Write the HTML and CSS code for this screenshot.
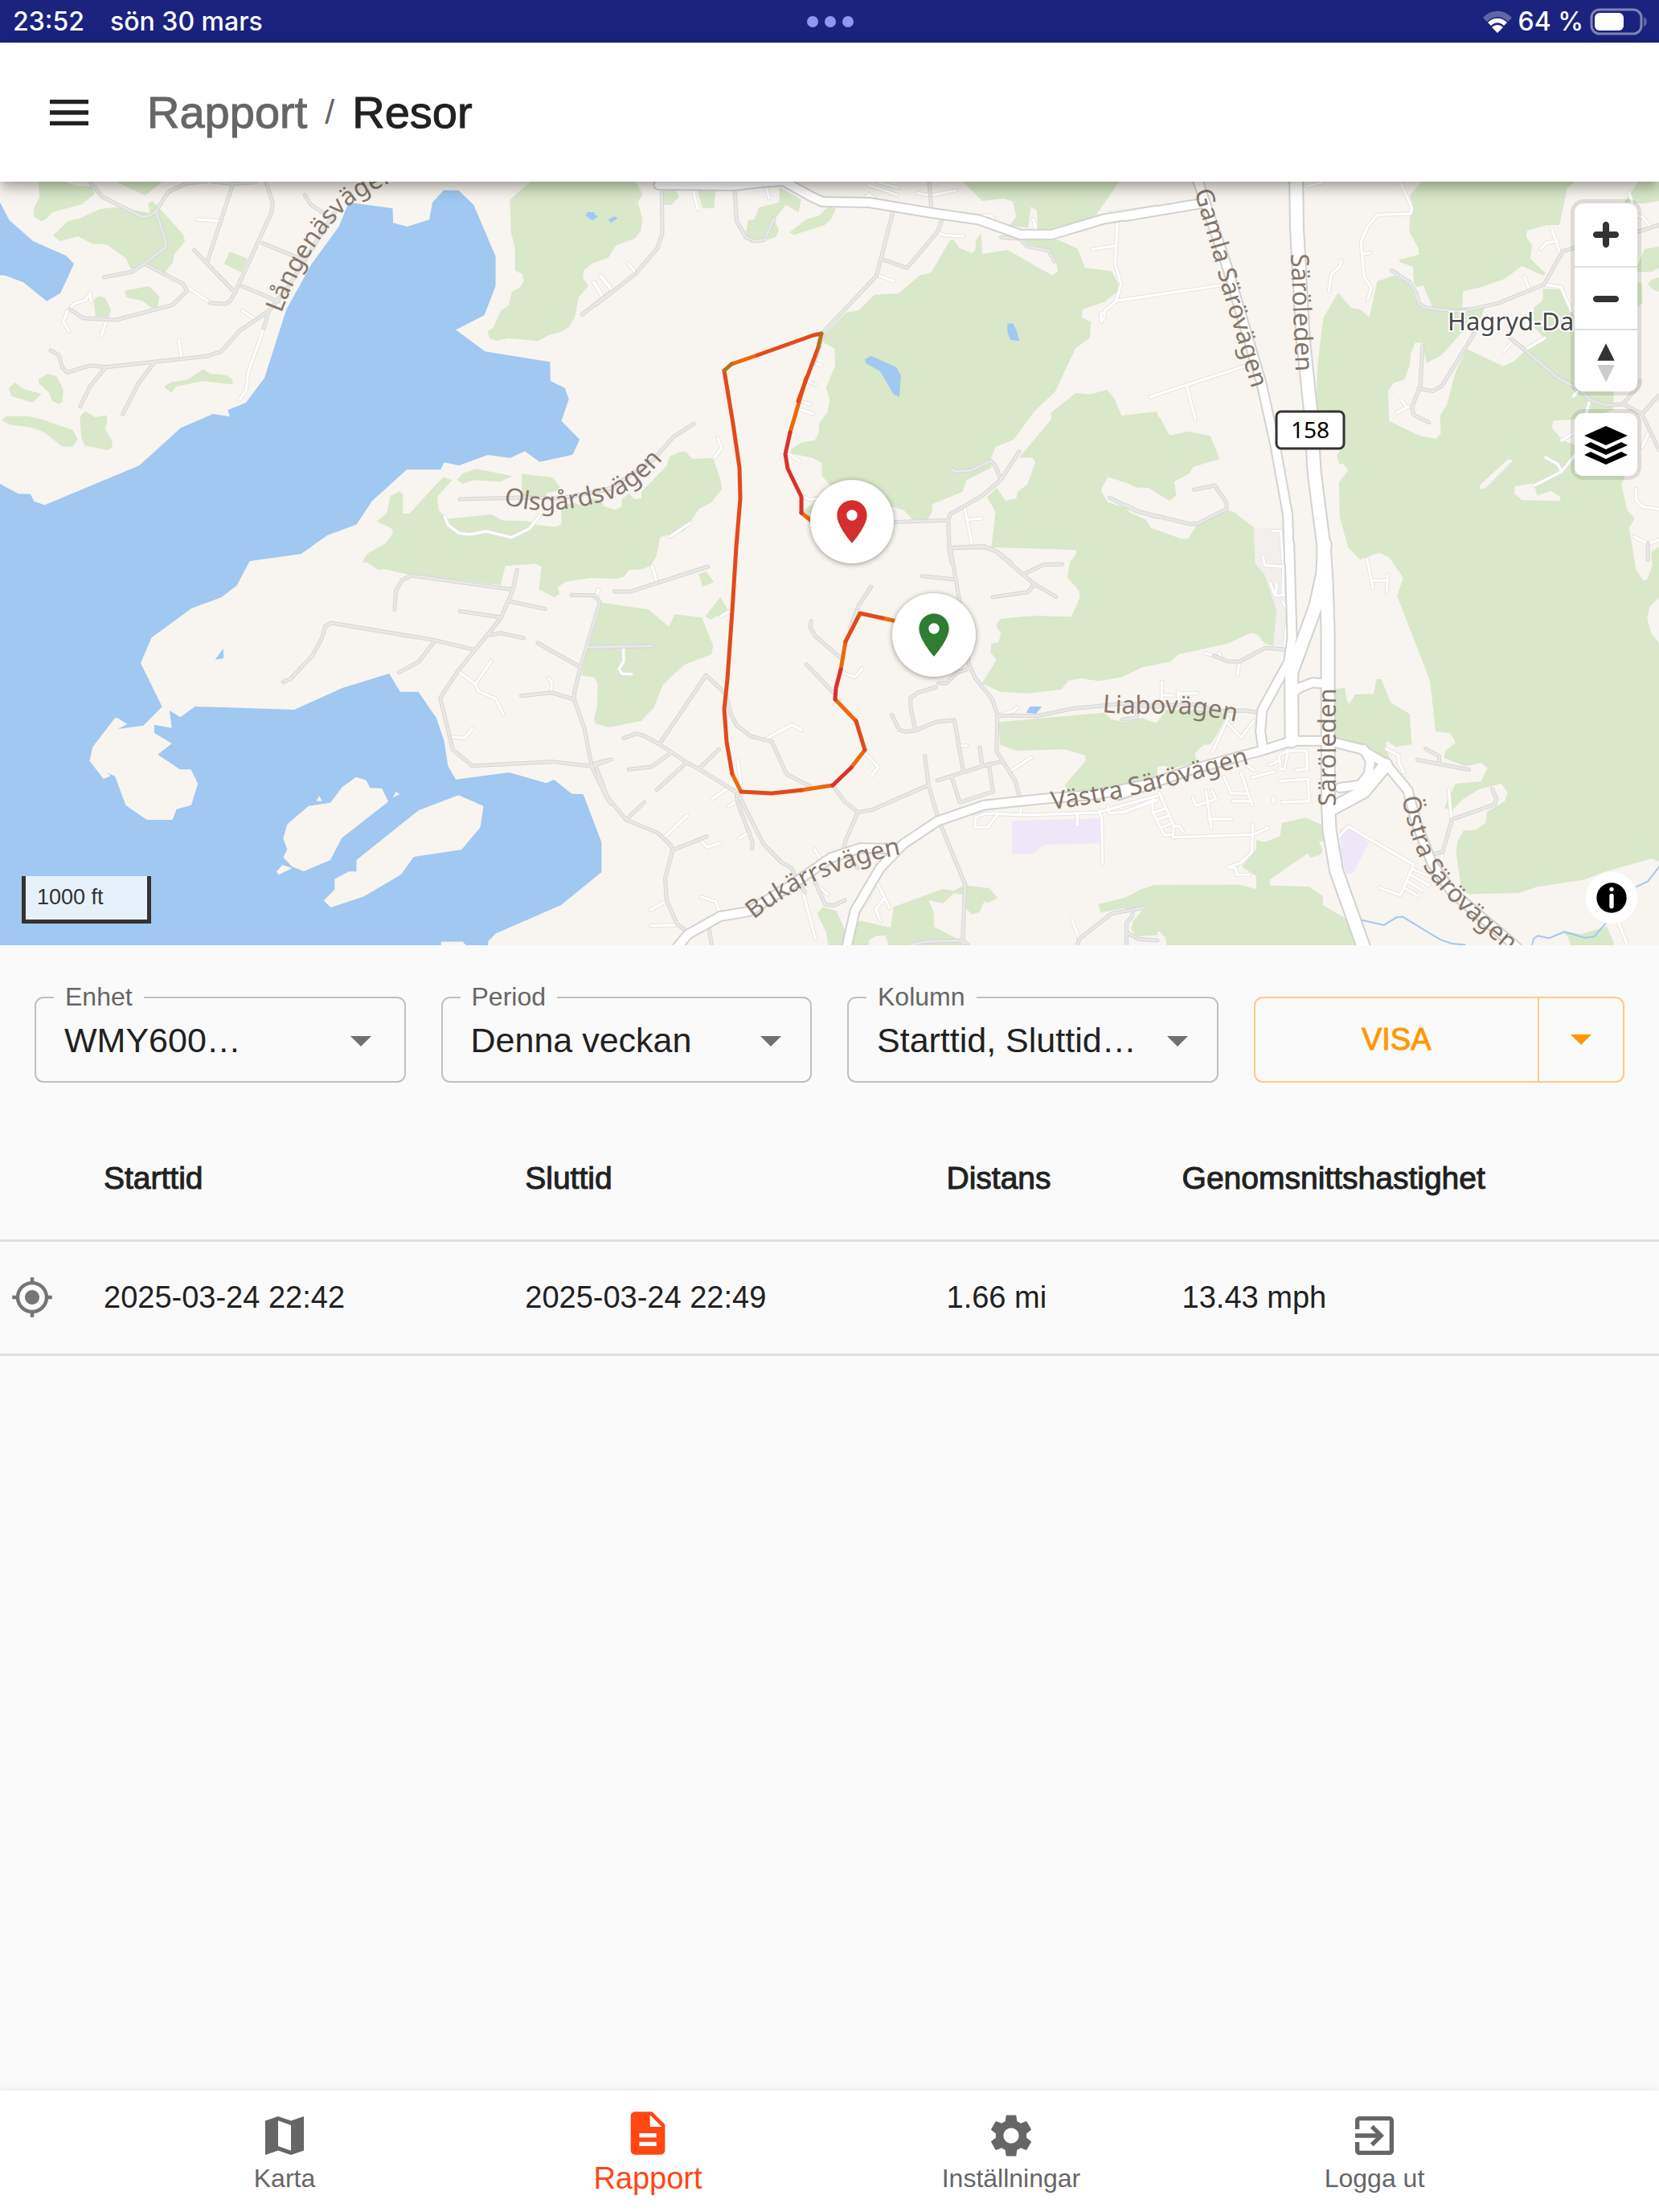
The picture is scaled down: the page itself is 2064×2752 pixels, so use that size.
FILE: index.html
```html
<!doctype html>
<html lang="sv">
  <head>
    <meta charset="UTF-8" />
    <meta name="viewport" content="width=device-width, initial-scale=1.0" />
    <title>Rapport / Resor</title>
    <link rel="stylesheet" href="styles.css">
  </head>
  <body>
    <div class="status-bar">
        <div class="status-left">
            <span>23:52</span>
            <span>sön 30 mars</span>
        </div>
        <svg class="dots" viewBox="0 0 58 14" aria-hidden="true">
            <circle cx="7" cy="7" r="7" /><circle cx="29" cy="7" r="7" /><circle cx="51" cy="7" r="7" />
        </svg>
        <div class="status-right">
            <svg class="wifi" viewBox="0 0 36 28" aria-hidden="true">
                <path class="faint" d="M0 9C10-2 26-2 36 9L31 14C23 6 13 6 5 14z" />
                <path d="M6 15C13 8 23 8 30 15L26 19C21 14 15 14 10 19z" />
                <path d="M11 21C15 17 21 17 25 21L18 28z" />
            </svg>
            <span>64 %</span>
            <svg class="battery" viewBox="0 0 72 34" aria-hidden="true">
                <rect class="battery-frame" x="2" y="2" width="62" height="30" rx="10" />
                <rect x="6" y="6" width="36" height="22" rx="6" />
                <path class="faint" d="M67 11c5 2 5 10 0 12z" />
            </svg>
        </div>
    </div>

    <header class="toolbar">
        <button type="button" class="icon-button" aria-label="Meny">
            <svg class="icon" viewBox="0 0 24 24"><path d="M3 18h18v-2H3v2zm0-5h18v-2H3v2zm0-7v2h18V6H3z" /></svg>
        </button>
        <nav class="breadcrumbs">
            <a href="#rapport">Rapport</a>
            <span class="separator">/</span>
            <h1>Resor</h1>
        </nav>
    </header>

    <main>
        <section class="map" aria-label="Karta">
            <svg class="map-canvas" viewBox="0 0 2064 950" preserveAspectRatio="xMidYMid slice">
                <defs>
                    <!-- small lanes and driveways -->
                    <g id="lanes">
                        <path transform="translate(0 -6) scale(.4847 .3333)" d="M507,159 L565,165 M233,465 L232,435 220,460 190,474 172,505 162,540 178,577 M273,535 L260,597 M459,610 L466,678 M677,565 L637,730 632,795 615,832 M622,500 L655,530 M1142,1268 L1150,1300 1178,1330 1204,1335 1248,1323 1313,1346 1360,1312 1385,1265 M1523,392 L1548,450 M1540,366 L1566,410 M480,412 L540,470" />
                        <path transform="translate(0 454) scale(.4847 .3333)" d="M1261,427 L1220,513 M1175,465 L1220,513 1228,540 1272,568 1292,625 M1408,492 L1416,505 1415,545 M1156,711 L1193,714 1213,678 M1537,160 L1532,185" />
                        <path transform="translate(740 -6) scale(.4464 .3333)" d="M273,40 L287,123 M475,30 L486,80 M93,323 L115,360 M15,370 L48,425 M0,395 L22,452 M785,365 L834,390 M762,30 L843,68 M790,20 L845,40 M748,88 L765,65 792,95 M898,60 L935,70 1007,50 M1000,142 L1105,145 1113,165 M1222,158 L1232,205 M953,208 L975,218 1028,222 M1442,133 L1472,127 M1458,135 L1450,325 1467,400 1453,463 1410,515 1412,540 1420,525 1422,505 M1453,463 L1568,440 M1385,270 L1450,258 M615,695 L632,705 M592,762 L615,775 M578,838 L600,850 M572,868 L608,885 M540,1033 L572,1062 M343,975 L353,1012 333,1050 M265,1293 L210,1343 M577,1190 L598,1205 625,1200 M1030,1230 L1052,1380 M1040,1280 L1078,1275 M1548,822 L1568,812" />
                        <path transform="translate(740 454) scale(.4464 .3333)" d="M10,160 L0,190 M160,72 L173,135 M80,370 L80,430 67,457 77,475 103,476 M352,260 L375,242 M473,720 L550,665 576,685 M398,795 L407,885 M327,942 L372,900 M372,970 L398,950 M192,1088 L257,1004 M290,1090 L313,1122 350,1107 M403,1090 L430,1065 M753,772 L790,823 770,858 M695,473 L725,487 746,455 M1130,628 L1165,615 1177,600 M1012,743 H1037 M1157,838 L1217,787 M1060,1048 L1062,1010 1085,998 1125,995 1095,1048 1060,1048 M1125,998 L1210,1002 1400,993 1568,930 M1187,960 V1000 M1345,995 V1040 M1405,985 L1413,1015 1415,1185 M155,1357 L200,1322 M295,1307 L337,1325 350,1370 M155,1415 L230,1413 M570,1240 L615,1463 M612,1130 L640,1190 M600,1240 L650,1300 M787,1255 L752,1335 M787,1255 L822,1350 M808,1310 L783,1355 796,1398 M1330,1392 L1350,1465 M1430,970 L1435,995 1475,990 1568,945" />
                        <path transform="translate(1400 -6) scale(.4235 .3333)" d="M808,20 L842,115 838,138 740,142 712,185 692,245 702,375 723,415 712,460 M697,287 L718,284 M635,312 L630,335 605,365 598,427 M535,35 L577,22 M1253,195 L1280,295 M1270,240 L1240,245 1220,268 M1172,372 L1188,425 M1230,402 L1280,412 1310,500 M1232,602 L1175,645 M1140,610 L1112,652 M0,458 L290,403 M75,820 L355,705 M180,780 L206,905 M810,832 L828,860 797,880 M828,860 L845,855 M1332,795 L1317,818 M1365,832 L1350,900 M1282,983 L1320,955 M1202,1152 L1282,1100 1320,1040 M1282,1100 L1270,1072 1235,1048 M1500,1165 L1502,1210 1520,1232 1568,1240 M1495,1343 L1535,1370 1568,1355 M1480,55 L1490,100 M1505,145 L1520,150 1545,190 M432,1322 L457,1322 463,1440 M1518,1010 L1540,950" />
                        <path transform="translate(1400 454) scale(.4235 .3333)" d="M235,397 L285,420 275,398 M335,430 L330,480 M405,40 L410,70 460,74 M465,0 L463,180 M425,135 L440,183 478,181 M445,137 L442,180 M462,205 L478,240 468,385 M710,47 L728,155 M722,127 H770 L768,170 M770,105 V127 M107,505 V585 M107,555 H140 M155,540 L158,600 M158,550 L210,547 M302,640 L255,770 M298,655 L340,712 378,650 M767,755 L803,780 803,805 818,843 M950,905 L958,1020 M625,1085 L655,1045 847,1187 808,1302 747,1273 M845,1205 L900,1235 M838,1225 L893,1265 M830,1250 L873,1285 M820,1275 L862,1305 M932,1140 L925,1200 M1448,1400 L1475,1487 M452,875 L537,868 540,950 460,954 M500,835 L535,830 532,762 478,762 455,775 450,800 425,815 M455,800 L455,830 467,832 478,762 M435,935 V955 M372,862 L437,840 M340,845 L373,965 M315,950 H365 M290,860 L310,920 355,922 M360,820 L378,835 M198,935 L207,967 267,943 255,910 M237,912 L253,1052 M245,1017 H312 M0,990 L85,945 M80,945 L80,990 115,1077 140,1075 M100,920 L142,1040 140,1085 375,1075 420,1050 M375,1037 L372,1140 340,1180 302,1197 325,1200 327,1225 365,1225 M88,990 L118,978 M97,1018 L125,1005 M108,1048 L133,1035 M142,1045 L158,1042 170,1065" />
                    </g>

                    <!-- residential streets -->
                    <g id="streets">
                        <path transform="translate(0 -6) scale(.4847 .3333)" d="M230,17 L262,74 365,150 385,145 400,128 432,57 478,24 530,17 M400,128 L425,240 424,264 370,324 340,354 267,375 M370,324 L470,400 480,425 443,478 298,534 213,527 180,495 M545,17 L598,26 655,20 M598,26 L532,318 M498,273 L603,432 M682,17 L700,97 697,133 603,432 590,465 577,475 540,470 M675,248 L770,305 M622,408 L715,465 M130,648 L151,665 160,712 172,730 232,704 272,710 532,669 568,652 615,575 690,500 740,410 860,130 M272,710 L232,780 206,857 M397,690 L355,772 315,886 M690,500 L677,565 M1180,1203 L1340,1197 1440,1200 1568,1165 M783,68 L797,103 830,135 M1494,514 L1568,430" />
                        <path transform="translate(0 454) scale(.4847 .3333)" d="M1013,235 L1016,165 1032,125 1057,108 1312,160 M1327,88 L1317,160 1285,268 1175,465 1130,565 1162,758 1212,818 1418,803 1519,820 1568,795 M1308,204 L1399,233 M1180,241 L1284,264 M1250,330 L1287,323 1344,342 M1217,385 L1117,350 850,285 835,297 827,340 802,407 745,495 727,505 M1117,350 L1075,430 1024,470 M1380,360 L1490,450 M1338,557 L1415,545 1474,570 M1467,181 L1527,182 1540,208 1490,450 1474,545 1474,570 1500,680 1519,820 1557,935 1568,960 M1507,376 H1568" />
                        <path transform="translate(740 -6) scale(.4464 .3333)" d="M187,40 L188,212 175,265 115,360 0,480 M390,45 L395,165 422,227 447,240 473,235 500,155 M832,125 L785,370 640,575 610,700 M932,17 L938,125 M968,160 L955,205 870,340 800,307 M1133,226 L1185,231 1205,260 1265,275 1281,315 M995,1090 L1002,1100 1050,1095 1103,1060 1115,1075 1132,1130 M1183,1025 L1132,1130 1080,1190 990,1260 985,1282 988,1385 994,1440 M985,1282 L830,1289 M988,1385 L1085,1378 1117,1395 1160,1440 M1435,1198 L1510,1248 1568,1270 M275,922 L220,970 160,1060 40,1165 0,1170" />
                        <path transform="translate(740 454) scale(.4464 .3333)" d="M55,168 L100,168 315,75 M0,375 L160,371 M80,715 L115,698 135,705 180,738 258,807 290,830 398,920 470,1110 520,1178 548,1200 585,1290 M310,480 L180,738 M310,480 L365,550 380,630 397,670 435,708 493,728 535,850 600,895 M95,832 L158,822 210,772 M173,908 L255,807 M290,830 L346,757 M0,810 L43,795 M0,810 L35,935 87,1020 175,1068 212,1115 217,1133 196,1237 200,1320 230,1410 260,1440 M87,1020 L138,955 M217,1133 L312,1082 M395,930 L398,955 440,1105 438,1127 M665,895 L695,950 733,992 698,1100 690,1150 M733,992 L775,982 925,893 M920,782 L930,890 958,1020 1032,1260 1025,1487 M603,278 L600,300 615,335 685,415 M770,150 L735,220 710,310 M590,440 L665,545 M912,110 L1000,122 M990,0 L1015,190 1043,440 1060,490 1108,570 1122,630 1120,765 1172,875 1185,940 M1045,455 L1010,470 980,510 958,510 M990,5 L1085,2 1117,17 1225,140 1285,187 M1200,100 L1252,67 1303,66 M1225,140 L1207,170 1110,188 M950,525 L900,545 880,565 880,600 893,685 M828,628 L848,683 865,691 893,687 950,655 1002,647 1027,838 M955,873 L1100,812 1135,803 M1073,750 L1080,820 M1098,812 L1110,915 1017,955 995,860 M1122,630 L1235,632 1330,605 1480,585 1568,600 M1470,645 L1510,640 1512,600 M610,1240 L642,1335 665,1340 697,1320 M318,1420 L326,1487 M880,1487 L920,1475 1025,1470 1040,1487 M1345,1487 L1350,1465 1440,1370 1532,1348 M1500,1357 L1498,1380 1482,1405 1482,1487 M1482,1440 L1515,1465 1568,1470 M700,1150 L732,1200" />
                        <path transform="translate(1400 -6) scale(.4235 .3333)" d="M783,350 L837,395 855,435 862,472 880,488 985,503 1095,472 1230,402 1285,278 1320,265 M1025,585 L930,780 903,800 862,790 M873,632 L867,780 842,860 847,888 892,917 M1130,600 L1270,750 1335,793 1365,832 1412,853 1462,848 1510,775 1512,762 M1462,848 L1518,885 1568,1020 M1518,885 L1568,815 M1505,205 L1568,180 M202,1168 L263,1152 297,1215 298,1240 215,1293 193,1297 40,1250 0,1225 M1535,1370 V1430" />
                        <path transform="translate(1400 454) scale(.4235 .3333)" d="M475,385 L412,378 335,430 300,428 260,407 M0,595 L200,590 280,613 350,612 395,620 M882,755 L922,782 922,808 M858,796 L1010,833 M1078,905 L1090,940 1085,963 960,1018 932,1140 900,1150" />
                    </g>

                    <!-- connecting roads -->
                    <g id="roads">
                        <path transform="translate(740 -6) scale(.4464 .3333)" d="M178,30 L388,33 470,20 525,15 605,75 635,93 765,96 940,135 1070,160 1185,215 1275,215 1420,157 1568,125" />
                        <path transform="translate(740 454) scale(.4464 .3333)" d="M230,1495 L260,1447 350,1380 430,1362 540,1270 660,1160 740,1125 840,1128 M702,1495 L725,1360 795,1200 860,1110 955,1025 1085,965 1240,943 1400,925 1568,880" />
                        <path transform="translate(1400 -6) scale(.4235 .3333)" d="M212,10 L300,340 400,770 440,1000 477,1260 482,1440 M0,147 L230,98" />
                        <path transform="translate(1400 454) scale(.4235 .3333)" d="M482,-10 L490,340 480,430 402,610 397,690 405,760 M-20,928 L200,830 405,760 490,725 595,725 690,755 765,810 830,910 855,1030 900,1180 960,1290 1150,1495 M490,545 L515,525 550,508 590,512 M700,755 L720,800 715,850 690,890 630,900" />
                    </g>

                    <!-- highway 158 -->
                    <g id="highway">
                        <path transform="translate(1400 -6) scale(.4235 .3333)" d="M502,10 L504,190 522,600 545,880 555,1100 583,1380 583,1440" />
                        <path transform="translate(1400 454) scale(.4235 .3333)" d="M583,-10 L590,120 595,300 596,960 600,1060 620,1210 700,1495 M586,-10 L580,100 560,220 488,470 489,725 M765,815 L700,915 605,980" />
                    </g>

                    <path id="label-langenas" d="M350,164 Q378,88 428,36 Q450,14 500,-4" />
                    <path id="label-olsgard" d="M626,401 L652,407 Q700,414 762,394 Q802,378 840,326" />
                    <path id="label-bukarr" d="M938,918 Q1010,858 1125,836" />
                    <path id="label-liabo" d="M1371,660 C1430,666 1470,654 1550,675" />
                    <path id="label-vastra" d="M1309,781 Q1410,770 1580,716" />
                    <path id="label-gamla" d="M1486,12 L1510,94 1521,135 1570,300" />
                    <path id="label-saroleden-n" d="M1606,90 L1614,280" />
                    <path id="label-saroleden-s" d="M1662,777 V580" />
                    <path id="label-ostra" d="M1744,766 Q1757,830 1777,862 Q1808,907 1920,992" />
                </defs>

                <rect class="land" width="2064" height="950" />

                <g class="areas">
                    <g transform="translate(0 -6) scale(.4847 .3333)">
                        <path class="water" d="M895,95 1008,118 1009,172 1045,186 1102,160 1110,95 1139,50 1177,50 1216,105 1272,297 1272,408 1243,517 1170,571 1245,652 1412,691 1413,762 1450,788 1460,830 1441,911 1488,980 1470,1037 1385,1064 1347,1024 1310,1049 1252,1038 1178,1077 1140,1066 1131,1093 1044,1093 955,1210 915,1298 840,1338 773,1407 641,1434 640,1440 0,1440 0,1146 47,1183 78,1184 88,1212 115,1225 358,1077 464,937 547,885 590,895 585,870 631,843 679,750 735,495 800,325 870,185z M0,95 24,162 85,240 170,295 190,325 155,434 120,464 60,394 15,369 0,367z" />
                        <path class="wood" d="M98,17 102,75 86,120 88,150 107,166 120,155 135,132 210,103 243,63 235,35 200,35 165,17z M295,17 373,70 417,17z M136,220 175,165 202,157 258,120 298,113 350,125 385,135 380,100 391,90 402,105 470,215 475,240 447,290 443,320 423,357 380,330 337,345 322,302 273,252 238,250 200,222 155,240z M590,279 635,305 620,357 575,325z M320,425 382,408 410,447 403,490 390,490 365,463 325,450z M240,460 253,445 270,452 285,497 278,525 245,520z M22,790 38,767 60,792 107,810 83,843 30,818z M99,755 122,735 145,745 163,795 160,840 150,848 133,835 127,808 100,770z M5,910 15,893 73,893 110,907 187,945 199,980 187,1007 160,1007 115,955 80,935 25,925z M205,893 219,875 245,897 273,890 276,902 270,943 288,985 287,1010 275,1020 218,1003 209,975z M421,782 440,766 480,758 522,718 540,735 582,740 597,758 597,775 520,762 453,782 439,806z" />
                        <path class="wood" d="M1362,17 1309,85 1312,210 1322,265 1322,350 1340,362 1345,387 1335,412 1314,430 1306,480 1286,500 1266,563 1252,575 1256,602 1275,612 1305,602 1380,613 1410,590 1440,578 1460,560 1475,525 1485,450 1511,406 1496,378 1498,350 1520,323 1560,302 1568,290 1568,17z M1174,1130 1187,1108 1222,1090 1315,1117 1285,1138 1215,1132 1187,1146z M1339,1109 1418,1122 1438,1157 1425,1175 1405,1178 1395,1200 1340,1200z M1137,1121 1161,1132 1122,1195 1126,1245 1148,1277 1262,1260 1290,1283 1355,1285 1380,1300 1425,1307 1441,1297 1441,1232 1470,1215 1500,1230 1520,1200 1545,1205 1550,1230 1568,1238 1568,1440 932,1440 935,1425 960,1395 990,1368 1009,1332 1005,1312 967,1287 993,1255 1002,1192 1026,1174 1034,1185 1034,1257 1051,1257z" />
                        <path class="water" d="M1503,145 1508,132 1525,132 1536,150 1520,162z" />
                    </g>
                    <g transform="translate(0 454) scale(.4847 .3333)">
                        <path class="water" d="M0,-20 800,-20 800,0 773,26 641,53 608,145 568,190 492,230 389,340 361,435 416,598 368,668 302,681 327,663 302,640 295,640 238,748 230,800 266,868 284,856 274,844 295,857 323,966 377,1020 443,1020 453,980 491,965 508,885 490,832 462,832 405,776 441,735 396,695 396,665 441,677 435,612 463,637 500,597 755,609 880,527 999,474 1027,542 1074,542 1120,640 1140,725 1150,820 1170,869 1307,843 1402,883 1422,870 1468,923 1497,924 1544,1105 1544,1215 1440,1338 1272,1445 1253,1473 1253,1495 0,1495z M573,381 574,417 552,422z" />
                        <path class="land" d="M914,860 940,872 950,901 980,902 997,952 877,1088 848,1170 780,1212 750,1195 727,1160 737,1130 727,1090 737,1037 792,968 848,956 878,898z M1177,928 1241,968 1233,1048 1185,1131 1062,1158 1029,1225 933,1307 849,1347 831,1322 859,1280 859,1241 895,1213 915,1213 915,1170 1075,984z M725,1188 750,1200 716,1225 709,1214z M819,930 827,950 812,950z M1016,914 1026,925 1009,936z M1132,1475 1188,1475 1200,1495 1132,1495z" />
                        <path class="wood" d="M975,0 945,25 932,50 972,88 985,83 1050,105 1285,143 1297,72 1375,64 1390,75 1383,160 1423,189 1436,178 1432,150 1452,131 1515,117 1568,119 1568,0z M1548,212 1568,212 1568,675 1530,660 1525,640 1534,590 1535,505 1527,489 1492,480 1507,375z" />
                    </g>
                    <g transform="translate(740 -6) scale(.4464 .3333)">
                        <path class="wood" d="M0,17 113,17 133,66 120,95 133,160 128,200 112,230 60,255 35,302 0,318z M193,50 225,50 235,75 213,105 193,105z M285,50 337,50 332,117 300,117z M515,40 575,85 568,133 533,105 500,158 513,200 505,225 475,237 435,247 420,220 427,163 445,160 457,115 515,95z M650,110 672,117 658,160 640,180 555,217 543,207 590,158 625,145z M1025,17 1462,17 1395,147 1325,195 1235,200 1232,125 1215,112 1208,190 1155,183 1175,150 1165,92 1140,82 1080,90z" />
                        <path class="wood" d="M1195,225 1290,235 1345,268 1367,340 1440,352 1460,400 1455,430 1420,467 1358,495 1358,525 1383,542 1380,600 1340,640 1283,802 1225,875 1168,980 1117,1008 1105,1050 1105,1085 1035,1133 1025,1175 940,1222 940,1250 928,1278 885,1280 862,1245 835,1233 700,1233 655,1150 633,1115 633,1068 605,1048 543,1032 550,1015 575,992 613,983 625,955 625,920 648,880 655,835 645,785 670,705 668,640 640,620 632,600 700,507 735,498 780,440 847,435 905,368 937,358 990,237 1000,235 1015,265 1050,285 1060,275 1063,235 1077,210 1080,288 1150,273 1275,368 1290,352 1285,310 1265,275 1205,250z" />
                        <path class="wood" d="M1340,807 1380,812 1427,795 1447,825 1468,892 1568,877 1568,1160 1520,1160 1430,1120 1410,1170 1430,1215 1480,1235 1505,1275 1530,1285 1545,1310 1568,1322 1568,1440 1325,1440 1343,1405 1340,1392 1105,1383 1117,1250 1093,1195 1120,1160 1145,1210 1175,1200 1178,1175 1205,1150 1228,1065 1220,1048 1183,1048 1272,905 1272,880z M160,1440 172,1412 182,1345 250,1320 290,1240 325,1215 355,1165 350,1130 330,1050 270,1052 253,1025 240,1025 208,1045 200,1080 130,1175 130,1200 110,1203 95,1180 75,1205 75,1232 55,1243 25,1230 0,1240 0,1440z M580,1245 620,1210 600,1285z" />
                        <path class="water" d="M753,680 770,668 840,710 853,740 849,822 833,812 795,725 755,695z M1150,548 1165,547 1175,570 1183,613 1158,608 1150,580z M37,160 55,147 64,155 45,172z M0,140 10,148 0,157z" />
                    </g>
                    <g transform="translate(740 454) scale(.4464 .3333)">
                        <path class="wood" d="M0,0 177,0 170,40 155,73 130,85 95,88 82,112 60,120 0,115z M290,102 310,93 332,133 300,150z M350,188 372,240 322,272 308,260z M20,210 150,235 207,300 222,253 298,265 330,370 325,402 250,440 190,515 165,600 130,650 40,675 0,660 8,600 8,510 0,490 0,300z M1085,0 1568,0 1568,440 1525,450 1470,487 1405,502 1355,492 1320,500 1300,533 1205,548 1130,542 1079,510 1120,423 1103,395 1105,362 1125,358 1132,325 1118,295 1130,270 1220,258 1328,262 1352,190 1350,165 1317,115 1325,55 1343,30 1340,12z M1125,655 1420,620 1440,645 1500,660 1520,640 1568,660 1568,860 1500,890 1320,915 1310,890 1368,800 1368,780 1310,757 1175,762 1130,740z" />
                        <path class="wood" d="M620,1370 635,1345 673,1360 700,1440 740,1397 825,1422 833,1345 970,1278 1000,1285 1030,1265 1100,1275 1123,1313 1095,1330 1085,1325 1072,1365 1050,1373 1035,1350 1032,1300 1000,1295 970,1332 930,1320 945,1365 945,1420 1020,1470 1020,1495 820,1495 810,1452 785,1452 763,1470 763,1495 652,1495 645,1440z M1403,1335 1480,1310 1525,1278 1568,1265 1568,1330 1410,1365z M1500,1400 1568,1340 1568,1450 1510,1455 1495,1430z" />
                        <path class="school" d="M1163,1023 1410,1015 1411,1108 1255,1112 1220,1147 1163,1148z" />
                        <path class="water" d="M1213,597 1246,597 1230,624 1202,620z M0,1040 18,1105 18,1215 0,1235z" />
                    </g>
                    <g transform="translate(1400 -6) scale(.4235 .3333)">
                        <path class="wood" d="M872,17 1322,17 1298,45 1275,180 1238,180 1180,200 1178,225 1195,255 1190,305 1235,360 1230,370 1165,332 1115,380 1045,412 992,427 990,488 903,487 875,405 857,412 848,398 845,335 805,318 805,310 863,290 862,270 835,205 838,65z" />
                        <path class="wood" d="M625,433 662,488 690,495 717,525 740,390 790,368 835,400 860,475 905,487 990,487 1055,490 1040,545 985,585 930,665 885,695 873,620 852,618 838,660 835,705 820,757 790,768 772,797 775,912 865,967 912,978 927,960 925,890 945,850 970,730 1003,642 1110,707 1140,690 1175,650 1230,600 1200,560 1200,490 1227,460 1227,418 1280,420 1320,520 1320,800 1435,800 1433,870 1412,880 1330,905 1258,910 1252,935 1285,985 1320,1000 1320,1110 1468,1115 1457,1150 1475,1245 1497,1275 1480,1310 1497,1440 800,1440 780,1420 745,1403 690,1425 655,1385 630,1270 628,1140 655,1095 640,1072 628,1072 622,1040 645,990 640,880 560,870 565,700 582,525z" />
                        <path class="wood" d="M0,890 85,877 105,905 130,965 185,950 250,967 277,1053 200,1082 187,1108 143,1138 150,1188 130,1210 65,1158 35,1160 0,1140z M0,1245 60,1280 75,1310 165,1352 185,1350 210,1300 300,1245 318,1250 378,1310 380,1440 0,1440z M1508,17 1568,17 1568,90 1520,100 1465,95z M1525,270 1568,260 1568,340 1545,355 1505,355 1505,330z M1545,385 1568,375 1568,430 1550,420 1535,400z M1505,390 1518,400 1520,470 1505,485z M1545,1410 1568,1397 1568,1440 1548,1440z" />
                        <path class="land" d="M1125,1053 1140,1058 1060,1160 1040,1168 1042,1150z M1145,1155 1200,1143 1210,1190 1250,1172 1278,1195 1278,1210 1165,1207 1142,1180z" />
                        <path class="industry" d="M378,1310 455,1310 458,1440 382,1440z" />
                    </g>
                    <g transform="translate(1400 454) scale(.4235 .3333)">
                        <path class="wood" d="M0,0 380,0 382,65 410,105 445,240 435,372 410,362 390,330 370,322 300,362 155,403 133,430 55,447 0,480z M652,0 690,48 747,23 775,40 817,117 798,183 895,500 912,690 955,697 971,732 940,763 937,790 1000,820 1045,807 1064,827 1045,877 970,885 937,975 960,985 990,945 1040,905 1105,885 1123,917 1115,950 1062,990 1060,1030 1030,1058 993,1060 975,1105 972,1145 988,1280 1010,1297 1155,1293 1210,1270 1350,1243 1410,1213 1545,1165 1568,1175 1568,360 1545,325 1533,268 1540,225 1568,190 1568,0 1545,20 1548,70 1535,120 1522,128 1500,85 1488,0z" />
                        <path class="wood" d="M612,532 645,528 650,575 658,588 675,552 730,550 738,495 752,495 780,582 835,625 842,738 795,748 770,727 765,735 778,800 730,760 690,740 612,715z M0,655 50,640 90,662 120,610 230,610 300,625 270,700 250,738 230,740 205,770 210,805 130,830 120,818 97,820 88,850 0,888z M460,1032 530,1012 580,1040 585,1100 568,1100 580,1130 575,1150 545,1162 535,1145 425,1243 425,1265 540,1270 580,1305 582,1340 650,1390 680,1495 123,1495 118,1460 100,1437 45,1453 20,1430 22,1400 55,1350 0,1355 0,1310 50,1280 85,1263 330,1262 385,1278 385,1230 342,1195 385,1130 385,1095 410,1103 455,1080z M1280,1433 1340,1447 1415,1418 1435,1480 1430,1495 1310,1495 1300,1455z" />
                        <path class="industry" d="M380,0 460,0 478,180 478,240 465,370 435,372 445,240 410,105 382,65z" />
                        <path class="school" d="M630,1055 655,1042 716,1105 668,1220 648,1222 635,1160z" />
                        <path class="stream" d="M690,1393 L760,1413 797,1384 815,1382 925,1467 960,1482 1000,1487 M1195,1487 L1200,1463 1212,1453 1245,1462 1290,1438 1350,1460 1378,1455 1412,1405 M1500,1270 L1535,1250 1568,1195" />
                    </g>
                </g>

                <use class="lane-edge" href="#lanes" />
                <use class="lane" href="#lanes" />
                <use class="street-edge" href="#streets" />
                <use class="street" href="#streets" />
                <use class="road-edge" href="#roads" />
                <use class="highway-edge" href="#highway" />
                <use class="road" href="#roads" />
                <use class="highway" href="#highway" />

                <g class="street-names">
                    <text><textPath href="#label-langenas">Långenäsvägen</textPath></text>
                    <text><textPath href="#label-olsgard">Olsgårdsvägen</textPath></text>
                    <text><textPath href="#label-bukarr">Bukärrsvägen</textPath></text>
                    <text><textPath href="#label-liabo">Liabovägen</textPath></text>
                    <text><textPath href="#label-vastra">Västra Särövägen</textPath></text>
                    <text><textPath href="#label-gamla">Gamla Särövägen</textPath></text>
                    <text><textPath href="#label-saroleden-n">Säröleden</textPath></text>
                    <text><textPath href="#label-saroleden-s">Säröleden</textPath></text>
                    <text><textPath href="#label-ostra">Östra Särövägen</textPath></text>
                </g>
                <text class="place-name" x="1801" y="185">Hagryd-Dal</text>
                <rect class="shield" x="1588" y="286" width="84" height="46" rx="6" />
                <text class="shield-text" x="1630" y="319">158</text>

                <!-- the trip, coloured by speed -->
                <g class="route">
                    <path d="M1120,548 L1098,543 M1052,572 L1046,607 M1039,644 L1065,671 M1076,707 L1059,729 M1036,751 L997,757 M922,759 L911,737 M910,227 L942,216 M1003,244 L983,312 M997,412 L1012,424" class="medium" />
                    <path d="M1098,543 L1070,537 1052,572 M1065,671 L1076,707 M997,757 L960,761 922,759 M911,737 L904,697 901,656 905,619 911,534 916,454 921,394 920,356 912,301 901,235 M942,216 L1012,191 1022,189 M1018,206 L993,273" class="fast" />
                    <path d="M1046,607 L1040,630 1039,644 M1059,729 L1036,751 M983,312 L977,339 980,357 997,392 997,412" class="fastest" />
                    <path d="M901,235 L910,227 M1022,189 L1018,206" class="slow" />
                </g>

                <g class="marker finish" transform="translate(1060 423)">
                    <circle r="52" />
                    <path transform="translate(-32 -32) scale(2.667)" d="M12 2C8.130 2 5 5.130 5 9c0 5.250 7 13 7 13s7-7.750 7-13c0-3.870-3.130-7-7-7zm0 9.500c-1.380 0-2.500-1.120-2.500-2.500s1.120-2.500 2.500-2.500 2.500 1.120 2.500 2.500-1.120 2.500-2.500 2.500z" />
                </g>
                <g class="marker start" transform="translate(1162 564)">
                    <circle r="52" />
                    <path transform="translate(-32 -32) scale(2.667)" d="M12 2C8.130 2 5 5.130 5 9c0 5.250 7 13 7 13s7-7.750 7-13c0-3.870-3.130-7-7-7zm0 9.500c-1.380 0-2.500-1.120-2.500-2.500s1.120-2.500 2.500-2.500 2.500 1.120 2.500 2.500-1.120 2.500-2.500 2.500z" />
                </g>
            </svg>

            <div class="map-controls">
                <div class="control-group">
                    <button type="button" aria-label="Zooma in">
                        <svg viewBox="0 0 29 29"><path d="M14.500 8.500c-.75 0-1.500.75-1.500 1.500v3h-3c-.75 0-1.500.75-1.500 1.500S9.250 16 10 16h3v3c0 .75.75 1.500 1.500 1.500S16 19.750 16 19v-3h3c.75 0 1.500-.75 1.500-1.500S19.750 13 19 13h-3v-3c0-.75-.75-1.500-1.500-1.500z" /></svg>
                    </button>
                    <button type="button" aria-label="Zooma ut">
                        <svg viewBox="0 0 29 29"><path d="M10 13c-.75 0-1.500.75-1.500 1.500S9.250 16 10 16h9c.75 0 1.500-.75 1.500-1.500S19.750 13 19 13h-9z" /></svg>
                    </button>
                    <button type="button" aria-label="Återställ norr">
                        <svg viewBox="0 0 29 29"><path d="M10.500 14l4-8 4 8h-8z" /><path class="south" d="M10.500 16l4 8 4-8h-8z" /></svg>
                    </button>
                </div>
                <div class="control-group">
                    <button type="button" class="layers" aria-label="Kartlager">
                        <svg viewBox="0 0 78 78"><path d="M39 16 66 28 39 40 12 28zM12 40l8-4 19 9 19-9 8 4-27 12zM12 52l8-4 19 9 19-9 8 4-27 12z" /></svg>
                    </button>
                </div>
            </div>

            <div class="scale">1000 ft</div>
            <button type="button" class="attribution" aria-label="Visa upphov">
                <svg viewBox="0 0 24 24"><circle cx="12" cy="12" r="7" /><circle class="mark" cx="12" cy="8" r="1" /><path class="mark-stem" d="M12 11v5" /></svg>
            </button>
        </section>

        <form class="filters">
            <div class="field autocomplete">
                <label for="device">Enhet</label>
                <select id="device"><option>WMY600…</option></select>
                <svg class="arrow" viewBox="0 0 10 5" aria-hidden="true"><path d="M0 0l5 5 5-5z" /></svg>
            </div>
            <div class="field">
                <label for="period">Period</label>
                <select id="period"><option>Denna veckan</option></select>
                <svg class="arrow" viewBox="0 0 10 5" aria-hidden="true"><path d="M0 0l5 5 5-5z" /></svg>
            </div>
            <div class="field">
                <label for="columns">Kolumn</label>
                <select id="columns"><option>Starttid, Sluttid…</option></select>
                <svg class="arrow" viewBox="0 0 10 5" aria-hidden="true"><path d="M0 0l5 5 5-5z" /></svg>
            </div>
            <div class="split-button">
                <button type="button" class="show">VISA</button>
                <button type="button" class="more" aria-label="Fler val">
                    <svg viewBox="0 0 10 5"><path d="M0 0l5 5 5-5z" /></svg>
                </button>
            </div>
        </form>

        <table class="trips">
            <thead>
                <tr>
                    <th class="col-action"></th>
                    <th class="col-time">Starttid</th>
                    <th class="col-time">Sluttid</th>
                    <th class="col-distance">Distans</th>
                    <th>Genomsnittshastighet</th>
                </tr>
            </thead>
            <tbody>
                <tr>
                    <td class="col-action">
                        <button type="button" class="icon-button" aria-label="Visa på karta">
                            <svg class="icon-small" viewBox="0 0 24 24"><path d="M12 8c-2.210 0-4 1.790-4 4s1.790 4 4 4 4-1.790 4-4-1.790-4-4-4zm8.940 3c-.46-4.170-3.770-7.480-7.940-7.940V1h-2v2.060C6.830 3.520 3.520 6.830 3.060 11H1v2h2.060c.46 4.170 3.770 7.480 7.940 7.940V23h2v-2.060c4.170-.46 7.480-3.770 7.940-7.940H23v-2h-2.060zM12 19c-3.870 0-7-3.130-7-7s3.130-7 7-7 7 3.130 7 7-3.130 7-7 7z" /></svg>
                        </button>
                    </td>
                    <td>2025-03-24 22:42</td>
                    <td>2025-03-24 22:49</td>
                    <td>1.66 mi</td>
                    <td>13.43 mph</td>
                </tr>
            </tbody>
        </table>
    </main>

    <nav class="bottom-nav">
        <a href="#karta">
            <svg class="icon" viewBox="0 0 24 24"><path fill-rule="evenodd" d="M3 5.100L9 3l6 2.100L21 3v15.900L15 21l-6-2.100L3 21zM9 5v11.900l6 2.100V7.100z" /></svg>
            <span>Karta</span>
        </a>
        <a href="#rapport" class="active">
            <svg class="icon" viewBox="0 0 24 24"><path d="M14 2H6c-1.100 0-1.990.9-1.990 2L4 20c0 1.100.89 2 1.990 2H18c1.100 0 2-.9 2-2V8l-6-6zm2 16H8v-2h8v2zm0-4H8v-2h8v2zm-3-5V3.500L18.500 9H13z" /></svg>
            <span>Rapport</span>
        </a>
        <a href="#installningar">
            <svg class="icon" viewBox="0 0 24 24"><path d="M19.140 12.940c.04-.3.06-.61.06-.94 0-.32-.02-.64-.07-.94l2.030-1.580c.18-.14.23-.41.12-.61l-1.920-3.320c-.12-.22-.37-.29-.59-.22l-2.390.96c-.5-.38-1.030-.7-1.620-.94l-.36-2.540c-.04-.24-.24-.41-.48-.41h-3.840c-.24 0-.43.17-.47.41l-.36 2.540c-.59.24-1.130.57-1.620.94l-2.390-.96c-.22-.08-.47 0-.59.22L2.740 8.870c-.12.21-.08.47.12.61l2.030 1.580c-.05.3-.09.63-.09.94s.02.64.07.94l-2.030 1.580c-.18.14-.23.41-.12.61l1.920 3.320c.12.22.37.29.59.22l2.390-.96c.5.38 1.030.7 1.620.94l.36 2.540c.05.24.24.41.48.41h3.840c.24 0 .44-.17.47-.41l.36-2.540c.59-.24 1.130-.56 1.620-.94l2.390.96c.22.08.47 0 .59-.22l1.920-3.320c.12-.22.07-.47-.12-.61l-2.010-1.580zM12 15.600c-1.980 0-3.600-1.620-3.600-3.600s1.620-3.600 3.600-3.600 3.600 1.620 3.600 3.600-1.620 3.600-3.600 3.600z" /></svg>
            <span>Inställningar</span>
        </a>
        <a href="#logga-ut">
            <svg class="icon" viewBox="0 0 24 24"><path d="M10.090 15.590L11.500 17l5-5-5-5-1.410 1.410L12.670 11H3v2h9.670l-2.580 2.590zM19 3H5c-1.110 0-2 .9-2 2v4h2V5h14v14H5v-4H3v4c0 1.100.89 2 2 2h14c1.100 0 2-.9 2-2V5c0-1.100-.9-2-2-2z" /></svg>
            <span>Logga ut</span>
        </a>
    </nav>
  </body>
</html>
```
FILE: styles.css
```css
:root {
    font-family: "Liberation Sans", Arial, Helvetica, sans-serif;
    font-size: 38px;
    color: #212121;
    background-color: #fafafa;
}

* {
    box-sizing: border-box;
    margin: 0;
    padding: 0;
}

body {
    display: flex;
    flex-direction: column;
    min-height: 100vh;
}

button {
    font: inherit;
    color: inherit;
    background: none;
    border: none;
    cursor: pointer;
}

a {
    color: inherit;
    text-decoration: none;
}

svg {
    display: block;
    fill: currentColor;
}

.icon-button {
    display: block;
}

.icon {
    width: 64px;
    height: 64px;
}

.icon-small {
    width: 54px;
    height: 54px;
}

/* status bar */
.status-bar {
    display: grid;
    grid-template-columns: 1fr auto 1fr;
    align-items: center;
    height: 53px;
    padding: 0 14px 0 16px;
    background-color: #1a237e;
    color: #fff;
    font-family: Inter, sans-serif;
    font-size: 32px;
    font-weight: 500;
}

.status-left {
    display: flex;
    gap: 32px;
}

.status-right {
    display: flex;
    align-items: center;
    justify-content: flex-end;
    gap: 8px;
}

.dots {
    width: 58px;
    height: 14px;
    fill: #9196ee;
}

.wifi {
    width: 36px;
    height: 28px;
}

.battery {
    width: 72px;
    height: 34px;
}

.faint {
    opacity: 0.3;
}

.battery-frame {
    fill: none;
    stroke: #8186b5;
    stroke-width: 3px;
}

/* toolbar */
.toolbar {
    display: flex;
    align-items: center;
    gap: 65px;
    height: 173px;
    padding: 0 54px;
    background-color: #fff;
    box-shadow: 0 5px 11px -3px rgba(0, 0, 0, 0.2), 0 11px 13px rgba(0, 0, 0, 0.14), 0 3px 27px rgba(0, 0, 0, 0.12);
    position: relative;
    z-index: 1;
}

.breadcrumbs {
    display: flex;
    align-items: center;
    gap: 22px;
    font-size: 56px;
    color: #666;
    -webkit-text-stroke: 1px;
}

.breadcrumbs h1 {
    font-size: 56px;
    font-weight: 400;
    color: #212121;
}

.separator {
    font-size: 43px;
    -webkit-text-stroke: 0;
}

/* map */
.map {
    position: relative;
    height: 950px;
    overflow: hidden;
}

.map-canvas {
    width: 100%;
    height: 100%;
}

.map-canvas path {
    vector-effect: non-scaling-stroke;
}

.land {
    fill: #f8f4ef;
}

.water {
    fill: #a0c8f0;
}

.wood {
    fill: #d8e8c8;
}

.school {
    fill: #efe7f8;
}

.industry {
    fill: #f3efec;
}

.stream {
    fill: none;
    stroke: #a0c8f0;
    stroke-width: 2px;
}

.map-canvas use {
    fill: none;
    stroke-linecap: round;
    stroke-linejoin: round;
}

.lane-edge {
    stroke: #e6e4e1;
    stroke-width: 5px;
}

.lane {
    stroke: #fff;
    stroke-width: 3px;
}

.street-edge {
    stroke: #d6d6d5;
    stroke-width: 5px;
}

.street {
    stroke: #e8e8e6;
    stroke-width: 3px;
}

.road-edge {
    stroke: #d2d2d1;
    stroke-width: 14px;
}

.road {
    stroke: #fff;
    stroke-width: 10px;
}

.highway-edge {
    stroke: #d2d2d1;
    stroke-width: 19px;
}

.highway {
    stroke: #fff;
    stroke-width: 15px;
}

.street-names,
.place-name,
.shield-text {
    font-family: "Noto Sans", sans-serif;
    font-size: 31px;
}

.street-names {
    fill: #85766a;
}

.place-name {
    fill: #484848;
    stroke: #fff;
    stroke-width: 4px;
    paint-order: stroke;
}

.shield {
    fill: #fff;
    stroke: #333;
    stroke-width: 3px;
}

.shield-text {
    font-size: 28px;
    fill: #000;
    text-anchor: middle;
}

.route {
    fill: none;
    stroke-width: 5px;
    stroke-linecap: round;
    stroke-linejoin: round;
}

.slow {
    stroke: #b9701a;
}

.medium {
    stroke: #ee680c;
}

.fast {
    stroke: #e24a1b;
}

.fastest {
    stroke: #d8332b;
}

.marker circle {
    fill: #fff;
    filter: drop-shadow(0 1px 3px rgba(0, 0, 0, 0.4));
}

.finish {
    fill: #d32f2f;
}

.start {
    fill: #2e7d32;
}

.map-controls {
    position: absolute;
    top: 27px;
    right: 27px;
    display: flex;
    flex-direction: column;
    gap: 27px;
    color: #333;
}

.control-group {
    border-radius: 11px;
    background-color: #fff;
    box-shadow: 0 0 0 5px rgba(0, 0, 0, 0.1);
}

.control-group button {
    display: block;
    width: 78px;
    height: 78px;
}

.control-group button + button {
    border-top: 2px solid #ddd;
}

.south {
    fill: #ccc;
}

.control-group .layers {
    color: #000;
}

.scale {
    position: absolute;
    left: 27px;
    bottom: 27px;
    width: 161px;
    height: 59px;
    padding: 0 14px;
    border: 5px solid #333;
    border-top: none;
    background-color: rgba(255, 255, 255, 0.75);
    color: #333;
    font-size: 27px;
    line-height: 52px;
}

.attribution {
    position: absolute;
    right: 27px;
    bottom: 27px;
    width: 64px;
    height: 64px;
    border-radius: 50%;
    background-color: #fff;
    color: #000;
}

.mark {
    fill: #fff;
}

.mark-stem {
    fill: none;
    stroke: #fff;
    stroke-width: 2px;
    stroke-linecap: round;
}

/* filters */
.filters {
    display: grid;
    grid-template-columns: repeat(4, 1fr);
    gap: 44px;
    padding: 64px 43px 43px;
}

.field {
    position: relative;
}

.field label {
    position: absolute;
    top: -18px;
    left: 24px;
    padding: 0 14px;
    background-color: #fafafa;
    color: #666;
    font-size: 32px;
    line-height: 36px;
}

.field select {
    appearance: none;
    display: block;
    width: 100%;
    height: 107px;
    padding: 0 84px 0 35px;
    border: 2px solid #c0c0c0;
    border-radius: 11px;
    background: none;
    color: #212121;
    font: inherit;
    font-size: 43px;
    text-overflow: ellipsis;
}

.arrow {
    position: absolute;
    top: 49px;
    right: 38px;
    width: 26px;
    height: 13px;
    color: #707070;
    pointer-events: none;
}

.autocomplete .arrow {
    right: 43px;
}

.split-button {
    display: flex;
    height: 107px;
    border: 2px solid #fcca87;
    border-radius: 11px;
    color: #ff9800;
}

.show {
    flex: 1;
    font-size: 38px;
    -webkit-text-stroke: 1px;
}

.more {
    width: 106px;
    border-left: 2px solid #fcca87;
}

.more svg {
    width: 26px;
    height: 13px;
    margin: 0 auto;
}

/* trips */
.trips {
    width: 100%;
    border-collapse: collapse;
    table-layout: fixed;
}

.trips th,
.trips td {
    padding: 0 0 0 43px;
    border-bottom: 3px solid #e0e0e0;
    text-align: left;
    font-weight: 400;
}

.trips th {
    height: 153px;
    font-size: 39px;
    -webkit-text-stroke: 1px;
}

.trips td {
    height: 142px;
}

.trips .col-action {
    width: 86px;
    padding: 0 0 0 13px;
    color: #757575;
}

.col-time {
    width: 25.4%;
}

.col-distance {
    width: 14.2%;
}

/* bottom navigation */
.bottom-nav {
    display: flex;
    justify-content: center;
    height: 151px;
    margin-top: auto;
    background-color: #fff;
    box-shadow: 0 3px 13px rgba(0, 0, 0, 0.14);
}

.bottom-nav a {
    display: flex;
    flex: 1;
    flex-direction: column;
    align-items: center;
    justify-content: center;
    gap: 3px;
    max-width: 452px;
    color: #666;
    font-size: 32px;
}

.bottom-nav .active {
    color: #ff4713;
    font-size: 38px;
}
```
